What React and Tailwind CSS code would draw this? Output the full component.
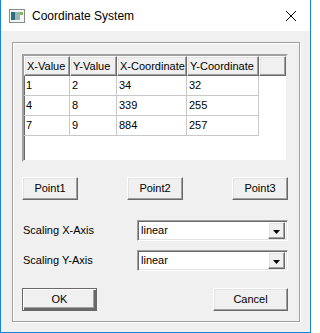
import React from "react";

const rows = [
  ["1", "2", "34", "32"],
  ["4", "8", "339", "255"],
  ["7", "9", "884", "257"],
];

const cols = ["w-[46px]", "w-[47px]", "w-[70px]", "w-[72px]"];
const headers = ["X-Value", "Y-Value", "X-Coordinate", "Y-Coordinate"];

// classic raised 3d edge
const bevel =
  "border border-t-white border-l-white border-b-[#696969] border-r-[#696969] shadow-[inset_-1px_-1px_0_#a0a0a0,inset_1px_1px_0_#e3e3e3]";

const PushButton = ({ label, width, primary }) => (
  <button
    type="button"
    className={`${width} h-[23px] bg-[#f0f0f0] text-black text-[11px] leading-none ${
      primary
        ? "border border-[#696969] shadow-[inset_1px_1px_0_#fff,inset_-2px_-2px_0_#696969,inset_-3px_-3px_0_#a0a0a0]"
        : bevel
    }`}
  >
    {label}
  </button>
);

const Combo = () => (
  <div className="w-[151px] h-[21px] bg-white flex items-center border border-t-[#a0a0a0] border-l-[#a0a0a0] border-b-white border-r-white shadow-[inset_1px_1px_0_#696969,inset_-1px_-1px_0_#e3e3e3] pl-[3px] pr-[2px]">
    <span className="flex-1 text-[11px] text-black">linear</span>
    <div className={`w-[17px] h-[17px] bg-[#f0f0f0] flex items-center justify-center ${bevel}`}>
      <svg width="7" height="4" viewBox="0 0 7 4" className="mt-[3px]">
        <path d="M0 0h7L3.5 4z" fill="#000" />
      </svg>
    </div>
  </div>
);

export default function App() {
  return (
    <div
      className="w-[311px] h-[333px] flex flex-col bg-white border-x border-b border-[#1883d7] text-black"
      style={{ fontFamily: '"Liberation Sans", Arial, sans-serif' }}
    >
      {/* title bar */}
      <div className="h-[31px] flex items-center bg-white pl-[8px] pr-[14px]">
        <svg width="16" height="16" viewBox="0 0 16 16">
          <rect x="0.5" y="1.5" width="15" height="13" fill="#f4f4f4" stroke="#8a8a8a" />
          <rect x="2" y="4" width="4" height="8" fill="#2f6f7a" />
          <rect x="6" y="4" width="5" height="8" fill="#9ab7b5" />
          <rect x="11" y="4" width="3" height="3" fill="#7fb65a" />
        </svg>
        <span className="ml-[7px] text-[12px] text-black">Coordinate System</span>
        <svg width="10" height="10" viewBox="0 0 10 10" className="ml-auto">
          <path d="M0 0L10 10M10 0L0 10" stroke="#000" strokeWidth="1" />
        </svg>
      </div>

      {/* body */}
      <div className="flex-1 bg-[#f0f0f0] pt-[11px] pl-[11px] pr-[10px] pb-[10px] text-[11px]">
        <div className="h-full border border-[#a0a0a0] shadow-[inset_1px_1px_0_#fff,1px_1px_0_#fff] pt-[11px] pl-[9px] pr-[10px] flex flex-col">
          {/* list view */}
          <div className="w-[266px] h-[108px] bg-white border-2 border-t-[#a0a0a0] border-l-[#a0a0a0] border-b-[#f0f0f0] border-r-[#f0f0f0] shadow-[inset_1px_1px_0_#696969]">
            <div className="flex h-[20px]">
              {headers.map((h, i) => (
                <div key={h} className={`${cols[i]} flex items-center pl-[2px] bg-[#f0f0f0] ${bevel}`}>
                  {h}
                </div>
              ))}
              <div className={`flex-1 bg-[#f0f0f0] ${bevel}`} />
            </div>
            {rows.map((r, ri) => (
              <div key={ri} className="flex h-[20px]">
                {r.map((c, ci) => (
                  <div
                    key={ci}
                    className={`${cols[ci]} flex items-center pl-[2px] border-r border-b border-[#c8c8c8]`}
                  >
                    {c}
                  </div>
                ))}
              </div>
            ))}
          </div>

          {/* point buttons */}
          <div className="flex justify-between w-[266px] mt-[15px]">
            <PushButton label="Point1" width="w-[56px]" />
            <PushButton label="Point2" width="w-[56px]" />
            <PushButton label="Point3" width="w-[56px]" />
          </div>

          {/* scaling */}
          <div className="flex items-center justify-between w-[266px] mt-[20px]">
            <span className="pl-[1px]">Scaling X-Axis</span>
            <Combo />
          </div>
          <div className="flex items-center justify-between w-[266px] mt-[9px]">
            <span className="pl-[1px]">Scaling Y-Axis</span>
            <Combo />
          </div>

          <div className="flex justify-between w-[266px] mt-[17px]">
            <PushButton label="OK" width="w-[75px]" primary />
            <PushButton label="Cancel" width="w-[75px]" />
          </div>
        </div>
      </div>
    </div>
  );
}
